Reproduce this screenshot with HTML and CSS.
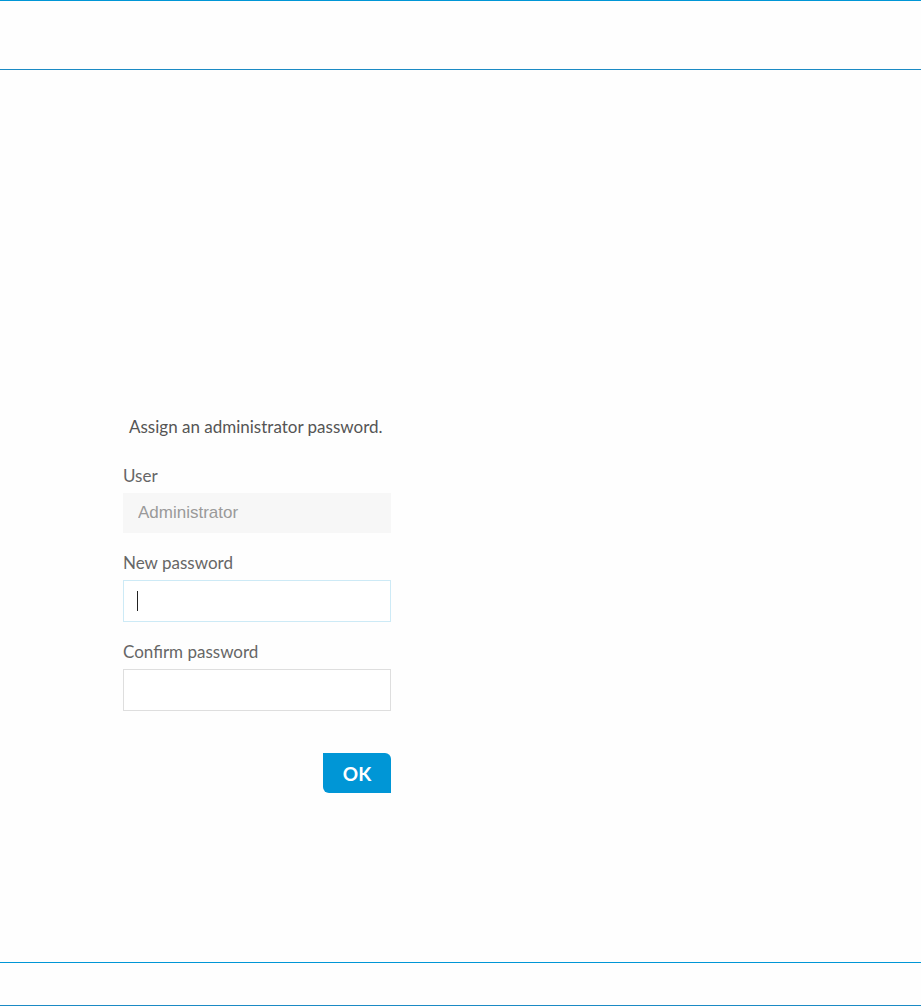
FILE: index.html
```html
<!DOCTYPE html>
<html lang="en">
<head>
    <meta charset="UTF-8">
    <meta name="viewport" content="width=device-width, initial-scale=1.0">
    <title>Administrator Password</title>
    <link rel="stylesheet" href="styles.css">
</head>
<body>
    <div class="page">
        <header class="top-bar"></header>

        <main class="main">
            <form class="password-form" id="passwordForm">
                <p class="intro">Assign an administrator password.</p>

                <div class="form-group">
                    <label for="user">User</label>
                    <input type="text" id="user" class="readonly" placeholder="Administrator" readonly>
                </div>

                <div class="form-group">
                    <label for="newPassword">New password</label>
                    <div class="input-wrap">
                        <input type="password" id="newPassword" class="active">
                        <span class="caret"></span>
                    </div>
                </div>

                <div class="form-group">
                    <label for="confirmPassword">Confirm password</label>
                    <input type="password" id="confirmPassword">
                </div>

                <div class="actions">
                    <button type="submit" class="ok-btn">OK</button>
                </div>
            </form>
        </main>

        <footer class="bottom-bar"></footer>
    </div>
</body>
</html>
```

FILE: styles.css
```css
* {
    margin: 0;
    padding: 0;
    box-sizing: border-box;
    font-family: 'Lato', 'DejaVu Sans', sans-serif;
}

body {
    background: #fefefe;
    color: #555;
}

.page {
    min-height: 100vh;
    display: flex;
    flex-direction: column;
}

.top-bar {
    height: 70px;
    border-top: 1px solid #0096d6;
    border-bottom: 1px solid #1b8ac4;
}

.main {
    flex: 1;
    padding: 347px 0 0 123px;
}

.bottom-bar {
    height: 44px;
    border-top: 1px solid #0096d6;
    border-bottom: 1px solid #1b8ac4;
}

.password-form {
    width: 268px;
    display: flex;
    flex-direction: column;
}

.intro {
    font-size: 17px;
    line-height: 20px;
    padding-left: 6px;
    color: #555;
    margin-bottom: 29px;
}

.form-group {
    display: flex;
    flex-direction: column;
    margin-bottom: 20px;
}

.form-group label {
    font-size: 17px;
    line-height: 20px;
    color: #666;
    margin-bottom: 7px;
}

.form-group input {
    width: 100%;
    height: 42px;
    border: 1px solid #dedede;
    background: #fff;
    padding: 0 14px;
    font-size: 17px;
    font-family: 'Liberation Sans', Arial, sans-serif;
    color: #555;
    caret-color: transparent;
    outline: none;
}

.form-group input.readonly {
    height: 40px;
    border-color: #f7f7f7;
    background: #f7f7f7;
}

.form-group input.readonly::placeholder {
    color: #9a9a9a;
}

.form-group input.active {
    border-color: #cdeaf6;
}

.input-wrap {
    position: relative;
}

.caret {
    position: absolute;
    left: 14px;
    top: 11px;
    width: 1px;
    height: 20px;
    background: #222;
}

.actions {
    display: flex;
    justify-content: flex-end;
    margin-top: 22px;
}

.ok-btn {
    width: 68px;
    height: 40px;
    background: #0096d6;
    color: white;
    border: none;
    border-radius: 0 6px 0 6px;
    font-size: 19px;
    font-weight: 700;
    cursor: pointer;
}
```
